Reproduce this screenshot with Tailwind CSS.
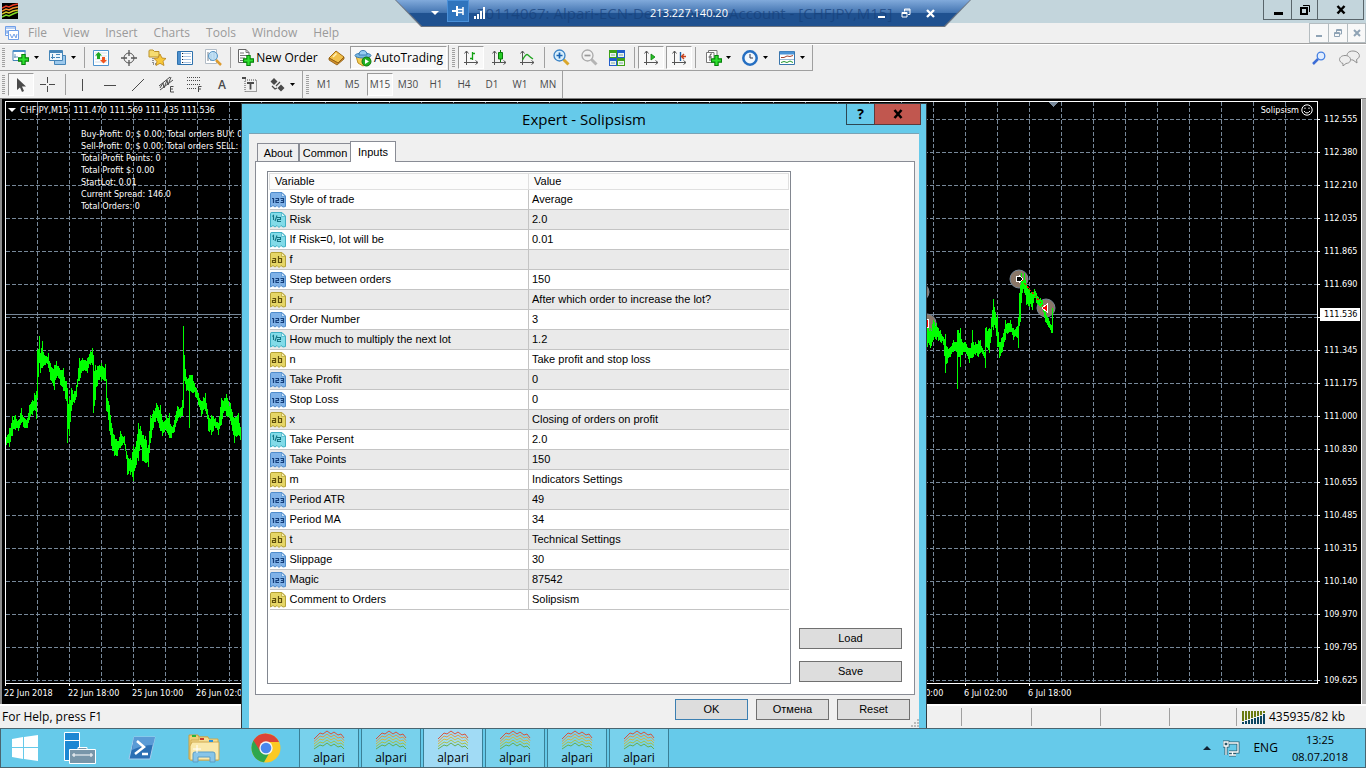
<!DOCTYPE html>
<html lang="en">
  <head>
    <meta charset="UTF-8" />
    <meta name="viewport" content="width=device-width, initial-scale=1.0" />
    <title>Expert - Solipsism</title>
    <script src="https://cdn.jsdelivr.net/npm/@tailwindcss/browser@4"></script>
  </head>
  <body
    class="relative flex h-screen flex-col overflow-hidden bg-[#f0f0f0] font-['Open_Sans',sans-serif] text-xs text-black"
  >
    <!-- shared icons -->
    <svg class="hidden">
      <symbol id="i-123" viewBox="0 0 16 16">
        <path d="M.5 1.500Q.5.5 2 .5H12L15.500 4V14.500L13 15 11 13.500 9 15.500 7 13.500 5 15 3 13.500.5 15Z" fill="#7fb2e8" stroke="#4f8ccb" />
        <path d="M11.500.5V4.500H15.500Z" fill="#c8e0fa" stroke="#4f8ccb" stroke-width=".7" />
        <path d="M2 6.500H3.500V11M5.500 6.500H8.500V8.500H6V10.500H9M10.500 6.500H13.500V10.500H10.500M11 8.500H13.500" fill="none" stroke="#143e7a" stroke-width="1.200" />
      </symbol>
      <symbol id="i-half" viewBox="0 0 16 16">
        <path d="M.5 1.500Q.5.5 2 .5H12L15.500 4V14.500L13 15 11 13.500 9 15.500 7 13.500 5 15 3 13.500.5 15Z" fill="#82dbe8" stroke="#3eaec3" />
        <path d="M11.500.5V4.500H15.500Z" fill="#d4f5fa" stroke="#3eaec3" stroke-width=".7" />
        <path d="M2.500 4.500 3.500 3.500V8M7 3.500 5 9M7 5.500H10.500V7.500H7.500V9.500H11" fill="none" stroke="#14707f" stroke-width="1.100" />
      </symbol>
      <symbol id="i-ab" viewBox="0 0 16 16">
        <path d="M.5 1.500Q.5.5 2 .5H12L15.500 4V14.500L13 15 11 13.500 9 15.500 7 13.500 5 15 3 13.500.5 15Z" fill="#e6d666" stroke="#b5a136" />
        <path d="M11.500.5V4.500H15.500Z" fill="#f8f0b0" stroke="#b5a136" stroke-width=".7" />
        <path d="M2.500 6.500H5.500V10.500H2.500V8.500H5.500M8.500 4V10.500H11.500V6.500H8.500" fill="none" stroke="#5e4e0c" stroke-width="1.200" />
      </symbol>
      <symbol id="i-alpari" viewBox="0 0 32 20">
        <g fill="none" stroke-width=".9">
          <path d="M1 9 7 3 10 4 14 1 18 4 21 2 25 5 28 4 31 8" stroke="#e04428" />
          <path d="M1 11.500 7 6 10 7 14 4 18 7 21 5 25 8 28 7 31 10.500" stroke="#ec9030" />
          <path d="M1 14 7 9 10 10 14 7 18 10 21 8 25 11 28 10 31 13" stroke="#dcb52c" />
          <path d="M1 16.500 7 12 10 13 14 10 18 13 21 11 25 14 28 13 31 15.500" stroke="#aebd30" />
          <path d="M1 19 7 15 10 16 14 13 18 16 21 14 25 17 28 16 31 19" stroke="#64a83c" />
        </g>
      </symbol>
      <symbol id="i-arrow" viewBox="0 0 5 3"><path d="M0 0H5L2.500 3Z" fill="#000" /></symbol>
      <symbol id="i-axes" viewBox="0 0 16 16">
        <path d="M3.500 1V15M1 12.500H15M1.500 3.500 3.500 1 5.500 3.500M12.500 10.500 15 12.500 12.500 14.500" fill="none" stroke="#555" />
      </symbol>
      <symbol id="i-plus" viewBox="0 0 10 10">
        <path d="M3.500.5H6.500V3.500H9.500V6.500H6.500V9.500H3.500V6.500H.5V3.500H3.500Z" fill="#2ee02e" stroke="#07820b" />
      </symbol>
    </svg>

    <!-- terminal title bar -->
    <header class="flex h-[23px] shrink-0 items-start justify-between bg-[#c3d5dc]">
      <svg class="mt-[3px] ml-[2px] size-4" viewBox="0 0 16 16">
        <path d="M0 0H16V16H0Z" fill="#000" />
        <g fill="none" stroke-width="1.500">
          <path d="M0 5 4 3 7 4 11 2 16 1" stroke="#ea3b24" />
          <path d="M0 8 4 6 7 7 11 5 16 4" stroke="#f08a27" />
          <path d="M0 11 4 9 7 10 11 8 16 7" stroke="#d8c62b" />
          <path d="M0 14 4 12 7 13 11 11 16 9" stroke="#7fdd22" />
        </g>
      </svg>
      <div class="mr-[2px] flex h-5 border border-t-0 border-[#59656b]">
        <button aria-label="Minimize" class="flex w-7 items-center justify-center border-r border-[#59656b]">
          <svg class="size-3" viewBox="0 0 12 12"><path d="M2 8H11V11H2Z" /></svg>
        </button>
        <button aria-label="Restore" class="flex w-[26px] items-center justify-center border-r border-[#59656b]">
          <svg class="size-3" viewBox="0 0 12 12" fill="none" stroke="#000"><path d="M2 4H8V10H2Z" stroke-width="2" /><path d="M4 1.500H10.500V8" stroke-width="1" /></svg>
        </button>
        <button aria-label="Close" class="flex w-[45px] items-center justify-center">
          <svg class="size-3" viewBox="0 0 12 12"><path d="M2.500 2 9.500 9.500M9.500 2 2.500 9.500" stroke="#000" stroke-width="2.500" /></svg>
        </button>
      </div>
    </header>

    <!-- menu -->
    <nav class="flex h-[21px] shrink-0 items-center border-b border-[#a0a0a0] text-[#9a9a9a]">
      <svg class="mr-[9px] ml-[5px] size-[14px]" viewBox="0 0 14 14" fill="#fff" stroke="#6f9fe8">
        <path d="M.5.5H10.500V9.500H.5Z" /><path d="M1 2H10M2 4V8M1.500 6H5" />
        <path d="M3.500 4.500H13.500V13.500H3.500Z" /><path d="M5 8 7 12 9 8 11 12 12 8" fill="none" />
      </svg>
      <button class="mr-4">File</button>
      <button class="mr-4">View</button>
      <button class="mr-4">Insert</button>
      <button class="mr-4">Charts</button>
      <button class="mr-4">Tools</button>
      <button class="mr-4">Window</button>
      <button>Help</button>
      <div class="ml-auto flex h-5 border border-[#b4bcc0] bg-[#f8f8f8]">
        <button aria-label="Minimize chart" class="flex w-[19px] items-center justify-center border-r border-[#b4bcc0]">
          <svg class="size-2" viewBox="0 0 8 8"><path d="M1 6H7V8H1Z" fill="#8fa3b5" /></svg>
        </button>
        <button aria-label="Restore chart" class="flex w-[19px] items-center justify-center border-r border-[#b4bcc0]">
          <svg class="size-2" viewBox="0 0 8 8" fill="none" stroke="#8fa3b5"><path d="M.5 3.500H5.500V7.500H.5ZM.5 4.500H5.500M2.500 3V.5H7.500V5H6M2.500 1.500H7.500" /></svg>
        </button>
        <button aria-label="Close chart" class="flex w-[17px] items-center justify-center">
          <svg class="size-2" viewBox="0 0 8 8"><path d="M1 1 7 7M7 1 1 7" stroke="#8fa3b5" stroke-width="2" /></svg>
        </button>
      </div>
    </nav>

    <!-- standard toolbar -->
    <div class="flex h-[27px] shrink-0 items-center border-t border-white pr-[6px]">
      <div class="flex h-full items-center border-r border-b border-[#a0a0a0] pr-[2px]">
        <div class="mr-[2px] ml-[2px] h-5 w-[3px] bg-[repeating-linear-gradient(#a0a0a0_0_1px,#f0f0f0_1px_2px)]"></div>
        <button aria-label="New chart" class="flex w-9 items-center justify-center gap-[5px]">
          <svg class="size-[17px]" viewBox="0 0 17 17"><path d="M1 1.500H13V11.500H1Z" fill="#fff" stroke="#4585b8" /><path d="M1 1H13.500V3H1Z" fill="#4a8fca" /><path d="M3 5V9M2 8H6" stroke="#6a99bd" /><use href="#i-plus" x="6" y="5" width="11" height="11" /></svg>
          <svg class="h-[3px] w-[5px]"><use href="#i-arrow" /></svg>
        </button>
        <button aria-label="Profiles" class="flex w-[38px] items-center justify-center gap-[5px]">
          <svg class="size-[17px]" viewBox="0 0 17 17" fill="#eef6fc" stroke="#4585b8"><path d="M5.500 6.500H16.500V15.500H5.500Z" fill="#9cc8ec" /><path d="M.5 1.500H13.500V11.500H.5Z" /><path d="M.5 3H13.500" stroke-width="2" /><path d="M3.500 5V10M2 8.500H6M7 5.500H11M7 8.500H11" /></svg>
          <svg class="h-[3px] w-[5px]"><use href="#i-arrow" /></svg>
        </button>
        <div class="mr-[2px] ml-[3px] h-[21px] w-px bg-[#a0a0a0]"></div>
        <button aria-label="Market Watch" class="flex w-7 justify-center">
          <svg class="size-4" viewBox="0 0 16 16"><path d="M.5.5H15.500V15.500H.5Z" fill="#fff" stroke="#4f94cf" /><path d="M2 3H14M2 6H14M2 9H14M2 12H14" stroke="#d6dfe8" /><path d="M5.500 2 9 5.500H7V9H4V5.500H2Z" fill="#1ea821" /><path d="M10.500 13.500 7 10H9V7H12V10H14Z" fill="#f0541e" /></svg>
        </button>
        <button aria-label="Data Window" class="flex w-7 justify-center">
          <svg class="size-4" viewBox="0 0 16 16" fill="none" stroke="#555"><circle cx="8" cy="8" r="5" /><path d="M8 0V6M8 10V16M0 8H6M10 8H16" stroke-width="1.300" /></svg>
        </button>
        <button aria-label="Navigator" class="flex w-7 justify-center">
          <svg class="h-[17px] w-[18px]" viewBox="0 0 18 17"><path d="M1 2Q1 1 2 1H5L6.500 2.500H11V8H1Z" fill="#f6dc70" stroke="#bb9126" /><path d="M5 9V15H8" fill="none" stroke="#333" stroke-dasharray="1 1" /><path d="M12 5 14 9 18 9.500 15 12.300 16 16.500 12 14.300 8 16.500 9 12.300 6 9.500 10 9Z" fill="#f8c83a" stroke="#b88214" stroke-width=".8" /></svg>
        </button>
        <button aria-label="Terminal" class="flex w-7 justify-center">
          <svg class="size-4" viewBox="0 0 16 16"><path d="M.5 1.500H15.500V14.500H.5Z" fill="#fff" stroke="#2f72ad" /><path d="M1 2H4V14H1Z" fill="#4d90ce" /><path d="M6 3.500H14M6 6.500H14M6 9.500H14M6 12.500H14" stroke="#aac4e2" /><path d="M5.500 3V13" stroke="#123" stroke-dasharray="1 2" /></svg>
        </button>
        <button aria-label="Strategy Tester" class="flex w-7 justify-center">
          <svg class="size-[17px]" viewBox="0 0 17 17"><path d="M.5.5H11.500V14.500H.5Z" fill="#fff" stroke="#b2bcc6" /><path d="M3 3V12M6 5V12M9 2V10" stroke="#75818d" /><circle cx="8" cy="7" r="4.500" fill="#b6dcf5" fill-opacity=".85" stroke="#5795c4" /><path d="M11 11 16 16" stroke="#dd9c30" stroke-width="2.500" /></svg>
        </button>
        <div class="mr-[2px] ml-[3px] h-[21px] w-px bg-[#a0a0a0]"></div>
        <button class="flex w-[89px] items-center justify-center gap-[2px] whitespace-nowrap">
          <svg class="size-[17px] shrink-0" viewBox="0 0 17 17"><path d="M1.500.5H9L12 3.500V13.500H1.500Z" fill="#fff" stroke="#666" /><path d="M9 .5V3.500H12M3 4H7M3 6.500H10M3 9H8M3 11.500H6" fill="none" stroke="#777" /><use href="#i-plus" x="6" y="6" width="11" height="11" /></svg>
          New Order
        </button>
        <button aria-label="MetaEditor" class="flex w-7 justify-center">
          <svg class="size-[17px]" viewBox="0 0 17 17"><path d="M1 9 8 2 16 8 10 14Z" fill="#f2c14b" stroke="#a36b12" /><path d="M1 9V11L9 16 16 10V8L10 14Z" fill="#d3912b" stroke="#8c5a10" stroke-width=".8" /><path d="M5 8 8.500 4.500" stroke="#fff2b8" stroke-width="1.500" /></svg>
        </button>
        <button aria-pressed="true" class="mr-px flex h-[23px] w-[97px] items-center justify-center gap-[2px] border border-[#9a9a9a] border-r-white border-b-white bg-[#f8f8f8]">
          <svg class="size-[18px]" viewBox="0 0 18 18"><path d="M2 7 4 14 9 17 14 14 16 7Z" fill="#f4cd54" stroke="#bd8d21" /><ellipse cx="9" cy="6.500" rx="8" ry="2.500" fill="#79b8e4" stroke="#3d7fb5" /><path d="M5 6Q5 1.500 9 1.500T13 6Z" fill="#96cdf2" stroke="#3d7fb5" /><circle cx="12.500" cy="12.500" r="4.500" fill="#22b022" stroke="#0c780c" /><path d="M11 10V15L15 12.500Z" fill="#fff" /></svg>
          AutoTrading
        </button>
        <div class="h-full w-px bg-[#a0a0a0]"></div>
        <div class="mr-[3px] ml-[3px] h-5 w-[3px] bg-[repeating-linear-gradient(#a0a0a0_0_1px,#f0f0f0_1px_2px)]"></div>
        <button aria-label="Bar chart" class="mr-px flex h-[23px] w-[26px] items-center justify-center border border-[#9a9a9a] border-r-white border-b-white bg-[#f8f8f8]">
          <svg class="size-4" viewBox="0 0 16 16"><use href="#i-axes" /><path d="M9.500 2V10M9.500 3.500H12M7 8.500H9.500" stroke="#12a012" stroke-width="1.300" /></svg>
        </button>
        <button aria-label="Candlesticks" class="flex w-7 justify-center">
          <svg class="size-4" viewBox="0 0 16 16"><use href="#i-axes" /><path d="M9.500 0V12" stroke="#097a09" /><path d="M7.500 2.500H11.500V9H7.500Z" fill="#25cc25" stroke="#097a09" /></svg>
        </button>
        <button aria-label="Line chart" class="flex w-7 justify-center">
          <svg class="size-4" viewBox="0 0 16 16"><use href="#i-axes" /><path d="M3.500 10Q7 3 9 5T14 9" fill="none" stroke="#20a420" stroke-width="1.300" /></svg>
        </button>
        <div class="mr-[2px] ml-[3px] h-[21px] w-px bg-[#a0a0a0]"></div>
        <button aria-label="Zoom in" class="flex w-7 justify-center">
          <svg class="size-[17px]" viewBox="0 0 17 17"><path d="M10.500 10.500 15.500 15.500" stroke="#daa72b" stroke-width="3" /><circle cx="6.500" cy="6.500" r="5.500" fill="#d8effc" stroke="#3b83c5" stroke-width="1.300" /><path d="M3.500 6.500H9.500M6.500 3.500V9.500" stroke="#1863b2" stroke-width="1.700" /></svg>
        </button>
        <button aria-label="Zoom out" class="flex w-7 justify-center">
          <svg class="size-[17px]" viewBox="0 0 17 17"><path d="M10.500 10.500 15.500 15.500" stroke="#b4b4b4" stroke-width="3" /><circle cx="6.500" cy="6.500" r="5.500" fill="#f2f2f2" stroke="#aaa" stroke-width="1.300" /><path d="M3.500 6.500H9.500" stroke="#999" stroke-width="1.700" /></svg>
        </button>
        <button aria-label="Tile windows" class="flex w-7 justify-center">
          <svg class="size-4" viewBox="0 0 16 16"><path d="M0 0H8V8H0ZM8 8H16V16H8Z" fill="#3fa218" /><path d="M8 0H16V8H8ZM0 8H8V16H0Z" fill="#225ecb" /><path d="M1 3H7V7H1ZM9 3H15V7H9ZM1 11H7V15H1ZM9 11H15V15H9Z" fill="#eef5ee" /><path d="M2 5H6M10 5H14M2 13H6M10 13H14" stroke="#7da4a0" /></svg>
        </button>
        <div class="mr-[3px] ml-[3px] h-[21px] w-px bg-[#a0a0a0]"></div>
        <button aria-label="Auto scroll" class="mr-[2px] flex h-[23px] w-[26px] items-center justify-center border border-[#9a9a9a] border-r-white border-b-white bg-[#f8f8f8]">
          <svg class="size-4" viewBox="0 0 16 16"><use href="#i-axes" /><path d="M8 4V10L12 7Z" fill="#28c028" stroke="#078007" stroke-width=".8" /></svg>
        </button>
        <button aria-label="Chart shift" class="flex h-[23px] w-[26px] items-center justify-center border border-[#9a9a9a] border-r-white border-b-white bg-[#f8f8f8]">
          <svg class="size-4" viewBox="0 0 16 16"><use href="#i-axes" /><path d="M9.500 2V11" stroke="#1b62a8" stroke-width="1.400" /><path d="M15 6.500H11M13 4 10.500 6.500 13 9" fill="none" stroke="#c7421b" stroke-width="1.400" /></svg>
        </button>
        <div class="mr-[3px] ml-[3px] h-[21px] w-px bg-[#a0a0a0]"></div>
        <button aria-label="Indicators" class="flex w-[37px] items-center justify-center gap-1">
          <svg class="size-[17px]" viewBox="0 0 17 17"><path d="M3.500 1.500H12V13.500H3.500Z" fill="#fff" stroke="#777" /><path d="M1.500 3.500H9V13.500H1.500Z" fill="#fff" stroke="#777" /><path d="M7 5Q5 4 5 7V12M3.500 8H7" fill="none" stroke="#555" /><use href="#i-plus" x="6" y="6" width="11" height="11" /></svg>
          <svg class="h-[3px] w-[5px]"><use href="#i-arrow" /></svg>
        </button>
        <button aria-label="Periods" class="flex w-[37px] items-center justify-center gap-[5px]">
          <svg class="size-4" viewBox="0 0 16 16"><circle cx="8" cy="8" r="6.700" fill="#f2f8fd" stroke="#256fc2" stroke-width="2.500" /><path d="M8 4V8H11" fill="none" stroke="#334" /></svg>
          <svg class="h-[3px] w-[5px]"><use href="#i-arrow" /></svg>
        </button>
        <button aria-label="Templates" class="flex w-[37px] items-center justify-center gap-[5px]">
          <svg class="size-4" viewBox="0 0 16 16"><path d="M.5 1.500H15.500V14.500H.5Z" fill="#fff" stroke="#3975ac" /><path d="M1 3H15" stroke="#4a93d5" stroke-width="3" /><path d="M2 7.500H5L8 6 11 6.500 14 5.500" fill="none" stroke="#a5432e" /><path d="M1 9.500H15" stroke="#9bbad5" /><path d="M2 12.500 5 11.500 8 12.500 11 11 14 12.500" fill="none" stroke="#22982c" /></svg>
          <svg class="h-[3px] w-[5px]"><use href="#i-arrow" /></svg>
        </button>
      </div>
      <div class="h-full flex-1"></div>
      <button aria-label="Search" class="mr-[13px]">
        <svg class="size-[14px]" viewBox="0 0 14 14"><circle cx="9" cy="5" r="3.800" fill="#e1edff" stroke="#4580e2" stroke-width="1.300" /><path d="M6 8 1 13" stroke="#3c6dd6" stroke-width="2.500" /></svg>
      </button>
      <button aria-label="Community">
        <svg class="h-4 w-[21px]" viewBox="0 0 21 16" fill="#eee" stroke="#8f8f8f"><path d="M14 1C9 1 8 4 8 5.500S10 10 14 10L18 13 17.500 9.500C23 7 20 1 14 1Z" /><path d="M6 5.500C2 5.500.5 8 .5 9.500S2 13 4 13.500L4 16 7 13.500C11 13 11.500 11 11.500 9.500S10 5.500 6 5.500Z" /></svg>
      </button>
    </div>

    <!-- drawing tools and timeframes -->
    <div class="flex h-[27px] shrink-0 items-center text-[#4a4a4a]">
      <div class="mr-[3px] ml-[2px] h-5 w-[3px] bg-[repeating-linear-gradient(#a0a0a0_0_1px,#f0f0f0_1px_2px)]"></div>
      <button aria-label="Cursor" class="flex h-[23px] w-[26px] items-center justify-center border border-[#9a9a9a] border-r-white border-b-white bg-[#f8f8f8]">
        <svg class="size-4" viewBox="0 0 16 16"><path d="M4 1V13L7 10.500 9 15 11 14 9 9.500H13Z" fill="#4a4a4a" /></svg>
      </button>
      <button aria-label="Crosshair" class="flex w-7 justify-center">
        <svg class="size-4" viewBox="0 0 16 16"><path d="M7.500 0V6M7.500 9V15M0 7.500H6M9 7.500H15" stroke="#4a4a4a" /></svg>
      </button>
      <div class="mr-[2px] ml-[3px] h-[21px] w-px bg-[#a0a0a0]"></div>
      <button aria-label="Vertical line" class="flex w-7 justify-center"><svg class="size-4" viewBox="0 0 16 16"><path d="M8.500 2V14" stroke="#4a4a4a" /></svg></button>
      <button aria-label="Horizontal line" class="flex w-7 justify-center"><svg class="size-4" viewBox="0 0 16 16"><path d="M2 8.500H14" stroke="#4a4a4a" /></svg></button>
      <button aria-label="Trendline" class="flex w-7 justify-center"><svg class="size-4" viewBox="0 0 16 16"><path d="M2 14 14 2" stroke="#4a4a4a" /></svg></button>
      <button aria-label="Channel" class="flex w-7 justify-center">
        <svg class="size-[17px]" viewBox="0 0 17 17" fill="none" stroke="#4a4a4a"><path d="M1 10 12 1M2 14 15 4M2 12 5 7 6 12 9 4 10 9 13 1" /><path d="M15.500 10.500H12.500V16H16M12.500 13H15" /></svg>
      </button>
      <button aria-label="Fibonacci" class="flex w-7 justify-center">
        <svg class="size-[17px]" viewBox="0 0 17 17" fill="none" stroke="#4a4a4a"><path d="M1 1.500H15M1 4.500H15M1 8.500H15M1 12.500H10" stroke-dasharray="1 1" /><path d="M15.500 10.500H12.500V16M12.500 13H15" /></svg>
      </button>
      <button class="w-7 text-center font-semibold">A</button>
      <button aria-label="Text label" class="flex w-7 justify-center">
        <svg class="size-4" viewBox="0 0 16 16" fill="none" stroke="#4a4a4a"><path d="M3 3H14.500V14.500H3Z" stroke-dasharray="1 1" /><path d="M5 6H12M8.500 6V12.500" stroke-width="1.800" /><path d="M0 1H4" stroke-width="2" /></svg>
      </button>
      <button aria-label="Arrows" class="flex w-9 items-center justify-center gap-[5px]">
        <svg class="size-[15px]" viewBox="0 0 15 15" fill="#4a4a4a"><path d="M4 1 7.500 4.500 4 8 .5 4.500ZM11 7.500 14.500 11 11 14.500 7.500 11Z" /><path d="M2 9 5 12 7 11M6 9 10 5" fill="none" stroke="#4a4a4a" stroke-width="1.200" /></svg>
        <svg class="h-[3px] w-[5px]"><use href="#i-arrow" /></svg>
      </button>
      <div class="ml-[2px] h-full w-px bg-[#a0a0a0]"></div>
      <div class="mr-px ml-[3px] h-5 w-[3px] bg-[repeating-linear-gradient(#a0a0a0_0_1px,#f0f0f0_1px_2px)]"></div>
      <div class="flex h-full items-center border-r border-[#a0a0a0] text-[10px]">
        <button class="w-7">M1</button>
        <button class="w-7">M5</button>
        <button aria-pressed="true" class="mx-px h-[23px] w-[26px] border border-[#9a9a9a] border-r-white border-b-white bg-[#f8f8f8]">M15</button>
        <button class="w-7">M30</button>
        <button class="w-7">H1</button>
        <button class="w-7">H4</button>
        <button class="w-7">D1</button>
        <button class="w-7">W1</button>
        <button class="w-7">MN</button>
      </div>
    </div>

    <!-- chart window -->
    <main class="relative flex min-h-0 flex-1 border-t border-[#808080] bg-black font-['DejaVu_Sans_Condensed','Liberation_Sans',sans-serif] text-[9px] text-white">
      <div class="w-[5px] shrink-0 border-l-2 border-[#8c8c8c]"></div>
      <div class="flex min-w-0 flex-1 flex-col pt-[2px]">
        <section class="relative min-h-0 flex-1 border border-white">
          <svg class="absolute inset-0 h-full w-full" shape-rendering="crispEdges">
            <defs>
              <pattern id="grid-v" x="31" y="0" width="32" height="6" patternUnits="userSpaceOnUse"><path d="M.5 0V4" stroke="#778899" /></pattern>
              <pattern id="grid-h" x="0" y="17" width="6" height="33" patternUnits="userSpaceOnUse"><path d="M0 .5H4" stroke="#778899" /></pattern>
            </defs>
            <rect width="100%" height="100%" fill="url(#grid-v)" />
            <rect width="100%" height="100%" fill="url(#grid-h)" />
            <path d="M0 212.500H1400" stroke="#778899" />
            <g fill="#8a7768" stroke="#778899" shape-rendering="auto">
              <circle cx="1013" cy="177" r="9" />
              <circle cx="1040" cy="206" r="9" />
              <circle cx="921" cy="221" r="9" />
              <circle cx="914" cy="190" r="9" />
            </g>
            <path id="bars" stroke="#00ff00" fill="none" />
            <path d="M1016 178 1038 205" stroke="#ff0000" stroke-dasharray="2 2" />
            <path d="M1013 173 1017 177 1013 181V179.500H1010V174.500H1013Z" fill="#000" stroke="#fff" />
            <path d="M1041 202V210L1036 206Z" fill="#f00" stroke="#fff" />
            <path d="M918 217V225H922V217Z" fill="#f00" stroke="#fff" />
            <path d="M1043 0H1052L1047.500 5Z" fill="#778899" />
          </svg>
          <div class="relative flex h-4 items-center justify-between pr-1 pl-[2px]">
            <p class="flex items-center gap-1 whitespace-pre"><svg class="h-1 w-2" viewBox="0 0 8 4"><path d="M0 0H8L4 4Z" fill="#fff" /></svg>CHFJPY,M15  111.470 111.569 111.435 111.536</p>
            <p class="flex items-center gap-[2px]">Solipsism
              <svg class="size-3" viewBox="0 0 12 12" fill="none" stroke="#fff"><circle cx="6" cy="6" r="5.200" /><path d="M4 3.500V5M8 3.500V5M3 7Q6 11 9 7" /></svg>
            </p>
          </div>
          <div class="relative mt-[10px] ml-[75px] w-[170px] overflow-hidden leading-3 whitespace-nowrap">
            <p>Buy-Profit: 0; $ 0.00; Total orders BUY: 0</p>
            <p>Sell-Profit: 0; $ 0.00; Total orders SELL: 0</p>
            <p>Total Profit Points: 0</p>
            <p>Total Profit $: 0.00</p>
            <p>StartLot: 0.01</p>
            <p>Current Spread: 146.0</p>
            <p>Total Orders: 0</p>
          </div>
        </section>
        <div id="dates" class="-ml-px flex h-5 shrink-0 justify-between leading-[18px] whitespace-nowrap"></div>
      </div>
      <div class="relative w-[43px] shrink-0 pt-1">
        <ul id="prices" class="leading-[33px]"></ul>
        <p class="absolute top-[209px] right-px left-[2px] bg-white pl-1 leading-[13px] text-black">111.536</p>
      </div>
      <div class="w-[5px] shrink-0 border-l border-white bg-[#b0b0b0]"></div>
    </main>

    <!-- status bar -->
    <footer class="flex h-6 shrink-0 items-center justify-between border-t-2 border-white pl-[2px]">
      <p>For Help, press F1</p>
      <div class="flex h-[18px] divide-x divide-[#a0a0a0]">
        <span class="w-[71px] border-l border-[#a0a0a0]"></span><span class="w-[69px]"></span><span class="w-[69px]"></span><span class="w-[67px]"></span>
        <span class="flex w-[129px] items-center gap-1 pl-[5px]">
          <svg class="h-[13px] w-[23px]" viewBox="0 0 23 13" shape-rendering="crispEdges">
            <path d="M1 0V10M4 0V9M7 0V8M10 0V7M13 0V6M16 0V5M19 0V4M22 0V2" stroke="#6a7a10" stroke-width="2" />
            <path d="M1 11V13M4 10V13M7 9V13M10 8V13M13 7V13M16 6V13M19 5V13M22 3V13" stroke="#0b4560" stroke-width="2" />
          </svg>
          435935/82 kb
        </span>
      </div>
    </footer>

    <!-- taskbar -->
    <div class="flex h-10 shrink-0 border border-[#4a6570] bg-[#66caea]">
      <button aria-label="Start" class="flex w-[48px] items-center justify-center">
        <svg class="size-7" viewBox="0 0 28 28" fill="#fff"><path d="M1 5 12 3V13H1ZM13 3 27 1V13H13ZM1 14H12V25L1 23ZM13 14H27V27L13 25Z" /></svg>
      </button>
      <button aria-label="Server Manager" class="flex w-[62px] items-center justify-center">
        <svg class="size-8" viewBox="0 0 32 32"><path d="M.5.5H15.500V28.500H.5Z" fill="#1d87d3" stroke="#fff" /><path d="M1 8.500H15" stroke="#fff" /><path d="M14 17V15.500H23V17M5.500 17.500H31.500V31.500H5.500Z" fill="#7896a9" stroke="#fff" /><path d="M8 23H29M10 21V25M27 21V25" stroke="#fff" /></svg>
      </button>
      <button aria-label="PowerShell" class="flex w-[62px] items-center justify-center">
        <svg class="h-6 w-7" viewBox="0 0 28 24"><path d="M6 1H27L22 23H1Z" fill="#2b6fb4" stroke="#a6cbed" /><path d="M6 1H27L25 9Q15 9 4 14Z" fill="#5a9bd6" /><path d="M9 5 16 11 7 18M14 18H20" fill="none" stroke="#fff" stroke-width="2.500" /></svg>
      </button>
      <button aria-label="File Explorer" class="flex w-[62px] items-center justify-center">
        <svg class="h-[30px] w-8" viewBox="0 0 32 30"><path d="M1 2H10L11 4H20V26H1Z" fill="#efcf77" stroke="#c69e43" /><path d="M11 4H20L21 6H30V27H3V7H11Z" fill="#f5de93" stroke="#cfaa51" /><path d="M4 9H31V27H2V13Z" fill="#fae9ac" stroke="#cfaa51" /><path d="M4 2H8V4H4Z" fill="#28b53a" /><path d="M12 5H16V7H12Z" fill="#cb392c" /><path d="M21 7H25V9H21Z" fill="#2990dc" /><path d="M5 29V21Q5 19 7 19H25Q27 19 27 21V29H22V24H10V29Z" fill="#87c5e8" stroke="#5a9dc5" /><path d="M9 12V20M5 16H13" stroke="#fff" /></svg>
      </button>
      <button aria-label="Chrome" class="flex w-[62px] items-center justify-center">
        <svg class="size-[30px]" viewBox="0 0 30 30"><circle cx="15" cy="15" r="14.500" fill="#fbc924" /><path d="M15 15 2.500 7.500A14.500 14.500 0 0 0 13 29.300L20 17Z" fill="#2ea74e" /><path d="M2.500 7.500A14.500 14.500 0 0 1 28 9H15L9 18Z" fill="#dc4437" /><circle cx="15" cy="15" r="6.700" fill="#f5f5f5" /><circle cx="15" cy="15" r="5.300" fill="#4a87ee" /></svg>
      </button>
      <div id="apps" class="ml-[2px] flex gap-[2px]"></div>
      <div class="ml-auto flex items-center">
        <svg class="mr-3 h-1 w-2" viewBox="0 0 8 4"><path d="M0 4 4 0 8 4Z" fill="#123" /></svg>
        <svg class="mr-[13px] size-[17px]" viewBox="0 0 17 17" fill="none" stroke="#2d5a6b" stroke-width="3"><path d="M6 3H15V12H6M9 12V15M6 15H13M3 2V15M1 2H5V6H1Z" /><path d="M6 3H15V12H6M9.500 12V15M6 15H13M3 6V15M1 2H5V6H1Z" stroke="#fff" stroke-width="1.300" /></svg>
        <button class="mr-[14px]">ENG</button>
        <p class="mr-[17px] text-center text-[11px] leading-[17px]">13:25<br />08.07.2018</p>
      </div>
    </div>

    <!-- remote desktop connection bar -->
    <div class="absolute top-0 left-[395px] h-[27px] w-[576px] bg-[#6c7480] [clip-path:polygon(0_0,100%_0,550px_100%,26px_100%)]">
      <div class="relative flex h-[26px] items-center justify-between bg-linear-to-b from-[#81aadb] from-0% via-[#4576b2] via-48% to-[#1f5190] to-50% pr-9 pl-[36px] text-white [clip-path:polygon(1px_0,575px_0,549px_100%,27px_100%)]">
        <p class="absolute left-[82px] text-[15px] whitespace-nowrap text-[#16407a]/70">70114067: Alpari-ECN-Demo: Demo Account - [CHFJPY,M15]</p>
        <div class="relative flex h-full items-center gap-2">
          <svg class="h-1 w-2" viewBox="0 0 8 4"><path d="M0 0H8L4 4Z" fill="#fff" /></svg>
          <button aria-label="Pin" class="-mt-1 flex h-[22px] w-[22px] items-center justify-center border border-[#4a90d9] bg-[#2f74bd]">
            <svg class="size-3" viewBox="0 0 12 12" fill="none" stroke="#fff"><path d="M0 6H5M5 1V11" stroke-width="2" /><path d="M5 4.500H11V7.500H5M11 2V10" stroke-width="1.500" /></svg>
          </button>
          <svg class="-ml-[3px] h-3 w-3" viewBox="0 0 12 12"><path d="M1 9V12M4 7V12M7 4V12M10 0V12" stroke="#fff" stroke-width="2" /></svg>
        </div>
        <p class="relative ml-[14px] text-[11px]">213.227.140.20</p>
        <div class="relative flex items-center gap-[15px]">
          <button aria-label="Minimize session"><svg class="h-3 w-2" viewBox="0 0 8 12"><path d="M0 9H7V11H0Z" fill="#fff" /></svg></button>
          <button aria-label="Restore session"><svg class="size-[10px]" viewBox="0 0 10 10" fill="none" stroke="#fff"><path d="M1 4.500H6V9H1ZM1 5.500H6M3.500 3.500V1H9V6.500H7M3.500 2H9" /></svg></button>
          <button aria-label="Close session"><svg class="size-[9px]" viewBox="0 0 9 9"><path d="M1 1 8 8M8 1 1 8" stroke="#fff" stroke-width="2.300" /></svg></button>
        </div>
      </div>
    </div>

    <!-- expert properties window -->
    <section class="absolute top-[103px] bottom-10 left-[241px] flex w-[686px] flex-col border border-b-0 border-[#303a40] bg-[#66caea] px-[7px] font-['Liberation_Sans',sans-serif] text-[11px]">
      <div class="-mr-[2px] flex h-[29px] shrink-0 items-start">
        <h1 class="flex-1 pl-[73px] text-center font-['Open_Sans',sans-serif] text-[15px] leading-[30px]">Expert - Solipsism</h1>
        <button aria-label="Help" class="flex h-[21px] w-[29px] items-center justify-center border border-t-0 border-[#2d4753] font-['Open_Sans',sans-serif] text-sm font-bold">?</button>
        <button aria-label="Close window" class="-ml-px flex h-[21px] w-[47px] items-center justify-center border border-t-0 border-[#5d3a3c] bg-[#c1574f]">
          <svg class="size-[10px]" viewBox="0 0 10 10"><path d="M1.500 1 8.500 9M8.500 1 1.500 9" stroke="#000" stroke-width="2.500" /></svg>
        </button>
      </div>
      <div class="flex min-h-0 flex-1 flex-col border-t border-[#7aa3b5] bg-[#f0f0f0] pt-[7px] pr-1 pl-[5px]">
        <div class="-mb-px ml-[3px] flex shrink-0 items-end" role="tablist">
          <button role="tab" class="mb-px h-[18px] w-[42px] border border-b-0 border-[#898c95] leading-[18px]">About</button>
          <button role="tab" class="mb-px h-[18px] w-[52px] border border-b-0 border-[#898c95] leading-[18px]">Common</button>
          <button role="tab" aria-selected="true" class="relative -ml-px h-[21px] w-[46px] border border-b-0 border-[#898c95] bg-white leading-[18px]">Inputs</button>
        </div>
        <div class="ml-px flex min-h-0 flex-1 gap-2 border border-[#898c95] bg-white pt-[9px] pr-3 pb-[10px] pl-[11px]">
          <div class="min-w-0 flex-1 border border-[#828790] p-px">
            <table class="w-full table-fixed border-collapse">
              <thead>
                <tr class="h-4 bg-[#fcfcfc] text-left leading-[15px]">
                  <th class="w-[259px] border border-[#e0e0e0] pl-[5px] font-normal">Variable</th>
                  <th class="border border-[#e0e0e0] pl-[5px] font-normal">Value</th>
                </tr>
              </thead>
              <tbody id="inputs"></tbody>
            </table>
          </div>
          <div class="flex w-[103px] flex-col justify-end gap-3 pb-[2px]">
            <button class="h-[21px] border border-[#707070] bg-[#dddddd]">Load</button>
            <button class="h-[21px] border border-[#707070] bg-[#dddddd]">Save</button>
          </div>
        </div>
        <div class="relative flex h-[33px] shrink-0 items-start justify-end gap-2 pt-1 pr-[5px]">
          <button class="h-[21px] w-[73px] border border-[#3c7fb1] bg-[#dddddd]">OK</button>
          <button class="h-[21px] w-[73px] border border-[#707070] bg-[#dddddd]">Отмена</button>
          <button class="h-[21px] w-[73px] border border-[#707070] bg-[#dddddd]">Reset</button>
          <svg class="absolute -right-1 bottom-px size-2" viewBox="0 0 8 8"><path d="M6 0H8V2H6ZM3 3H5V5H3ZM6 3H8V5H6ZM0 6H2V8H0ZM3 6H5V8H3ZM6 6H8V8H6Z" fill="#bcbcbc" /></svg>
        </div>
      </div>
    </section>

    <script>
      const inputs = [
        ["123", "Style of trade", "Average"],
        ["half", "Risk", "2.0"],
        ["half", "If Risk=0, lot will be", "0.01"],
        ["ab", "f", ""],
        ["123", "Step between orders", "150"],
        ["ab", "r", "After which order to increase the lot?"],
        ["123", "Order Number", "3"],
        ["half", "How much to multiply the next lot", "1.2"],
        ["ab", "n", "Take profit and stop loss"],
        ["123", "Take Profit", "0"],
        ["123", "Stop Loss", "0"],
        ["ab", "x", "Closing of orders on profit"],
        ["half", "Take Persent", "2.0"],
        ["123", "Take Points", "150"],
        ["ab", "m", "Indicators Settings"],
        ["123", "Period ATR", "49"],
        ["123", "Period MA", "34"],
        ["ab", "t", "Technical Settings"],
        ["123", "Slippage", "30"],
        ["123", "Magic", "87542"],
        ["ab", "Comment to Orders", "Solipsism"],
      ];
      document.getElementById("inputs").innerHTML = inputs
        .map(
          ([icon, name, value]) => `
          <tr class="h-5 border-b border-[#c4c4c4] leading-[19px] even:bg-[#eaeaea]">
            <td class="border-r border-[#c4c4c4]"><span class="flex items-center gap-1"><svg class="size-4"><use href="#i-${icon}" /></svg>${name}</span></td>
            <td class="pl-[3px]">${value}</td>
          </tr>`
        )
        .join("");

      // the empty entry sits behind the current price label
      const prices = [
        "112.555", "112.380", "112.210", "112.035", "111.865", "111.690", "", "111.345", "111.175",
        "111.000", "110.830", "110.655", "110.485", "110.315", "110.140", "109.970", "109.795", "109.625",
      ];
      document.getElementById("prices").innerHTML = prices
        .map((p) => `<li class="flex h-[33px] items-center gap-1"><span class="h-px w-[2px] bg-white"></span>${p}</li>`)
        .join("");

      const tick = (t) =>
        `<span class="relative w-16 before:absolute before:left-px before:h-[2px] before:w-px before:bg-white">${t}</span>`;
      document.getElementById("dates").innerHTML =
        `<div class="flex">${["22 Jun 2018", "22 Jun 18:00", "25 Jun 10:00", "26 Jun 02:00"].map(tick).join("")}</div>` +
        `<div class="mr-[226px] flex">${["5 Jul 10:00", "6 Jul 02:00", "6 Jul 18:00"].map(tick).join("")}</div>`;

      document.getElementById("apps").innerHTML = [0, 1, 2, 3, 4, 5]
        .map(
          (i) => `
          <button class="flex h-full w-[60px] flex-col items-center border-x border-[#3a7f96] pt-px leading-4 ${i === 2 ? "bg-[#a1dbf5]" : "bg-[#78d1ec]"}">
            <svg class="h-5 w-8"><use href="#i-alpari" /></svg>alpari
          </button>`
        )
        .join("");

      // x, high, low in thirds of a pixel; values between points are interpolated
      const left = [
        [15,1020,1046],[22,1010,1035],[28,990,1048],[38,955,1010],[46,950,995],[55,965,1000],[65,930,975],[72,960,990],
        [82,960,990],[88,920,965],[96,905,950],[104,885,935],[109,880,962],[112,755,900],[118,715,795],[122,765,825],
        [128,730,810],[136,775,800],[145,765,810],[152,800,845],[163,800,875],[170,790,840],[182,815,860],[190,810,880],
        [198,850,910],[202,870,1036],[207,900,1010],[215,870,935],[222,880,915],[230,860,895],[238,780,850],[248,780,820],
        [262,780,825],[270,760,800],[277,750,800],[280,770,945],[286,800,905],[295,805,845],[303,795,850],[312,810,850],
        [315,797,850],[320,860,940],[328,920,1000],[336,990,1060],[342,1010,1075],[352,1030,1073],[362,998,1050],
        [372,1015,1040],[382,1070,1130],[390,1080,1130],[400,1045,1150],[410,1030,1100],[414,975,1090],[420,985,1040],
        [428,1010,1090],[436,1015,1095],[445,1040,1108],[450,950,1035],[460,935,990],[470,915,960],[480,920,1000],
        [488,965,1015],[500,950,1000],[508,945,1020],[514,985,1020],[524,965,1000],[532,925,970],[540,930,960],
        [547,905,955],[550,685,930],[553,770,850],[558,838,880],[565,840,880],[568,830,990],[571,830,880],[578,830,885],
        [590,870,900],[605,910,955],[615,885,940],[625,950,1000],[635,950,1010],[645,960,990],[655,975,1010],
        [663,900,980],[672,900,940],[680,888,955],[690,915,970],[697,945,1000],[702,960,1035],[715,945,1010],[722,985,1045],
      ];
      const right = [
        [22,240,320],[30,265,325],[40,240,300],[48,250,300],[60,270,305],[70,290,315],[76,283,398],[82,320,370],
        [90,320,350],[100,300,335],[109,305,335],[112,270,446],[115,270,350],[121,265,380],[126,305,345],[135,305,335],
        [147,325,368],[154,310,355],[157,270,355],[160,305,350],[165,305,345],[175,300,350],[182,300,340],[193,335,355],
        [196,265,383],[200,260,320],[208,265,338],[215,235,290],[220,178,270],[225,215,265],[232,225,320],[238,305,355],
        [246,290,335],[257,240,295],[265,250,280],[272,240,275],[280,265,300],[290,260,290],[296,230,323],[300,135,245],
        [304,98,190],[308,120,160],[313,98,160],[320,135,195],[328,145,200],[338,160,210],[343,147,175],[350,160,190],
        [360,175,200],[368,180,205],[376,215,245],[384,235,260],[394,255,280],[397,205,280],[400,205,280],
      ];
      let seed = 7;
      function rand() {
        seed = (seed * 16807) % 2147483647;
        return seed / 2147483647;
      }
      function bars(points, dx, dy) {
        let d = "";
        for (let i = 0; i < points.length - 1; i++) {
          const [x1, h1, l1] = points[i];
          const [x2, h2, l2] = points[i + 1];
          for (let x = x1; x < x2; x += 3) {
            const t = (x - x1) / (x2 - x1);
            const high = h1 + (h2 - h1) * t;
            const low = l1 + (l2 - l1) * t;
            const cut = x === x1 ? 0 : (low - high) * 0.25;
            const px = Math.floor(x / 3 + dx) + 0.5;
            d += `M${px} ${Math.round((high + rand() * cut) / 3 + dy)}V${Math.round((low - rand() * cut) / 3 + dy)}`;
          }
        }
        return d;
      }
      document
        .getElementById("bars")
        .setAttribute("d", bars(left, -6, -4) + bars(right, 914, 138));
    </script>
  </body>
</html>
